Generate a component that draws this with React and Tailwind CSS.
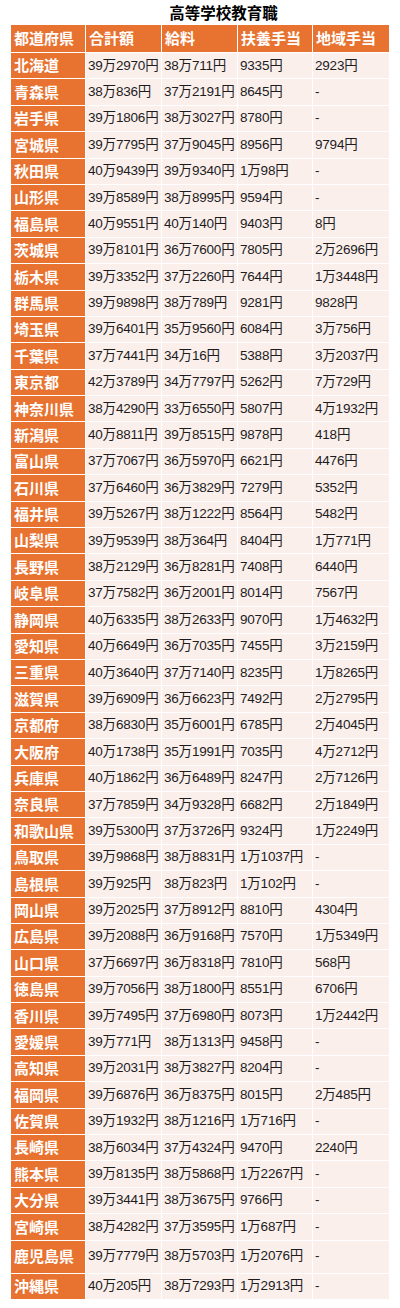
import React from "react";

const rows = [
  ["北海道", "39万2970円", "38万711円", "9335円", "2923円"],
  ["青森県", "38万836円", "37万2191円", "8645円", "-"],
  ["岩手県", "39万1806円", "38万3027円", "8780円", "-"],
  ["宮城県", "39万7795円", "37万9045円", "8956円", "9794円"],
  ["秋田県", "40万9439円", "39万9340円", "1万98円", "-"],
  ["山形県", "39万8589円", "38万8995円", "9594円", "-"],
  ["福島県", "40万9551円", "40万140円", "9403円", "8円"],
  ["茨城県", "39万8101円", "36万7600円", "7805円", "2万2696円"],
  ["栃木県", "39万3352円", "37万2260円", "7644円", "1万3448円"],
  ["群馬県", "39万9898円", "38万789円", "9281円", "9828円"],
  ["埼玉県", "39万6401円", "35万9560円", "6084円", "3万756円"],
  ["千葉県", "37万7441円", "34万16円", "5388円", "3万2037円"],
  ["東京都", "42万3789円", "34万7797円", "5262円", "7万729円"],
  ["神奈川県", "38万4290円", "33万6550円", "5807円", "4万1932円"],
  ["新潟県", "40万8811円", "39万8515円", "9878円", "418円"],
  ["富山県", "37万7067円", "36万5970円", "6621円", "4476円"],
  ["石川県", "37万6460円", "36万3829円", "7279円", "5352円"],
  ["福井県", "39万5267円", "38万1222円", "8564円", "5482円"],
  ["山梨県", "39万9539円", "38万364円", "8404円", "1万771円"],
  ["長野県", "38万2129円", "36万8281円", "7408円", "6440円"],
  ["岐阜県", "37万7582円", "36万2001円", "8014円", "7567円"],
  ["静岡県", "40万6335円", "38万2633円", "9070円", "1万4632円"],
  ["愛知県", "40万6649円", "36万7035円", "7455円", "3万2159円"],
  ["三重県", "40万3640円", "37万7140円", "8235円", "1万8265円"],
  ["滋賀県", "39万6909円", "36万6623円", "7492円", "2万2795円"],
  ["京都府", "38万6830円", "35万6001円", "6785円", "2万4045円"],
  ["大阪府", "40万1738円", "35万1991円", "7035円", "4万2712円"],
  ["兵庫県", "40万1862円", "36万6489円", "8247円", "2万7126円"],
  ["奈良県", "37万7859円", "34万9328円", "6682円", "2万1849円"],
  ["和歌山県", "39万5300円", "37万3726円", "9324円", "1万2249円"],
  ["鳥取県", "39万9868円", "38万8831円", "1万1037円", "-"],
  ["島根県", "39万925円", "38万823円", "1万102円", "-"],
  ["岡山県", "39万2025円", "37万8912円", "8810円", "4304円"],
  ["広島県", "39万2088円", "36万9168円", "7570円", "1万5349円"],
  ["山口県", "37万6697円", "36万8318円", "7810円", "568円"],
  ["徳島県", "39万7056円", "38万1800円", "8551円", "6706円"],
  ["香川県", "39万7495円", "37万6980円", "8073円", "1万2442円"],
  ["愛媛県", "39万771円", "38万1313円", "9458円", "-"],
  ["高知県", "39万2031円", "38万3827円", "8204円", "-"],
  ["福岡県", "39万6876円", "36万8375円", "8015円", "2万485円"],
  ["佐賀県", "39万1932円", "38万1216円", "1万716円", "-"],
  ["長崎県", "38万6034円", "37万4324円", "9470円", "2240円"],
  ["熊本県", "39万8135円", "38万5868円", "1万2267円", "-"],
  ["大分県", "39万3441円", "38万3675円", "9766円", "-"],
  ["宮崎県", "38万4282円", "37万3595円", "1万687円", "-"],
  ["鹿児島県", "39万7779円", "38万5703円", "1万2076円", "-"],
  ["沖縄県", "40万205円", "38万7293円", "1万2913円", "-"],
];

const headers = ["都道府県", "合計額", "給料", "扶養手当", "地域手当"];

const gridCols = "grid grid-cols-[74px_75px_75px_74px_76px] gap-x-px";

function DataRow({ row }) {
  const tall = row[0] === "鹿児島県";
  return (
    <div className={`${gridCols} ${tall ? "h-[33px]" : "h-[26.4px]"} pb-px`}>
      <div className="flex items-center bg-[#e8722f] pl-[3px] text-[15px] font-bold text-white">
        {row[0]}
      </div>
      {row.slice(1).map((v, i) => (
        <div
          key={i}
          className="flex items-center bg-[#fbefec] pl-[2px] text-[13.5px] tracking-[-0.2px] text-[#1c1c1c] whitespace-nowrap overflow-visible"
          style={{ fontFamily: '"Liberation Sans", "Noto Sans CJK JP", sans-serif' }}
        >
          {v}
        </div>
      ))}
    </div>
  );
}

export default function App() {
  return (
    <div
      className="w-[400px] bg-white pb-[10px]"
      style={{ fontFamily: '"Noto Sans CJK JP", sans-serif' }}
    >
      <div className="flex h-[25px] items-center justify-center pl-[47px] text-[15.5px] font-bold text-black">
        高等学校教育職
      </div>
      <div className="ml-[11px] w-[378px]">
        <div className={`${gridCols} h-[28px] pb-px`}>
          {headers.map((h) => (
            <div
              key={h}
              className="flex items-center bg-[#e8722f] pl-[3px] text-[15px] font-bold text-white"
            >
              {h}
            </div>
          ))}
        </div>
        {rows.map((r) => (
          <DataRow key={r[0]} row={r} />
        ))}
      </div>
    </div>
  );
}
